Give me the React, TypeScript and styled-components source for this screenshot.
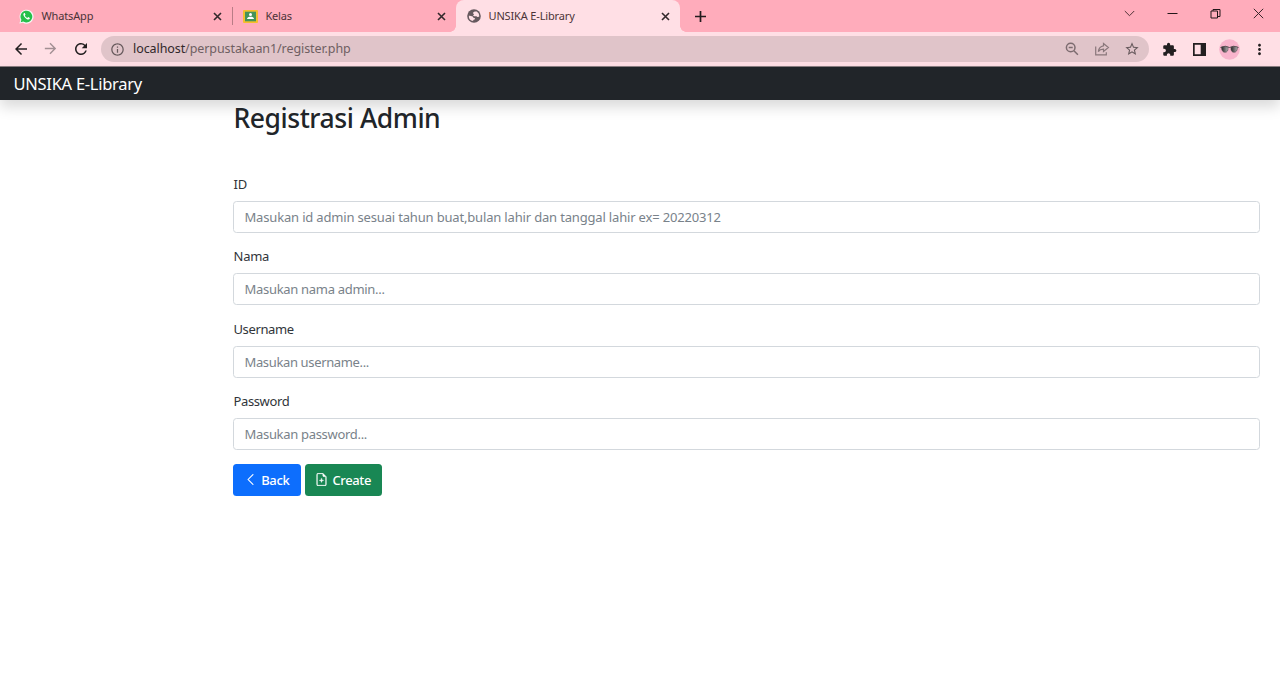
import React from "react";
import styled, { createGlobalStyle } from "styled-components";
import { MdArrowBack, MdArrowForward, MdRefresh, MdInfoOutline, MdExtension, MdMoreVert, MdStarBorder } from "react-icons/md";
import { BsChevronLeft, BsFileEarmarkPlus } from "react-icons/bs";

const GlobalStyle = createGlobalStyle`
  *, *::before, *::after { box-sizing: border-box; }
  body { margin: 0; background: #fff; font-family: "Noto Sans", "Open Sans", sans-serif; color: #212529; overflow: hidden; }
  svg { display: block; flex: none; }
`;

const Screen = styled.div`
  width: 1280px;
  height: 682px;
  display: flex;
  flex-direction: column;
  background: #fff;
`;

const TabStrip = styled.div`
  height: 32px;
  flex: none;
  display: flex;
  align-items: stretch;
  padding-left: 8px;
  background: #ffacbb;
`;

const Tab = styled.div<{ $active?: boolean; $divider?: boolean }>`
  position: relative;
  width: 224px;
  display: flex;
  align-items: center;
  padding: 0 10px 0 11px;
  border-radius: 8px 8px 0 0;
  background: ${(p) => (p.$active ? "#ffdfe5" : "transparent")};
  ${(p) =>
    p.$divider &&
    `&::after { content: ""; position: absolute; right: -1px; top: 7px; width: 1px; height: 18px; background: #b97c86; }`}
  ${(p) =>
    p.$active &&
    `
    &::before, &::after { content: ""; position: absolute; bottom: 0; width: 6px; height: 6px; }
    &::before { left: -6px; background: radial-gradient(circle at 0 0, transparent 5.5px, #ffdfe5 6px); }
    &::after { right: -6px; background: radial-gradient(circle at 100% 0, transparent 5.5px, #ffdfe5 6px); }
  `}
`;

const TabTitle = styled.span<{ $spacing: number }>`
  flex: 1;
  margin-left: 7.5px;
  font-size: 11px;
  line-height: 16px;
  letter-spacing: ${(p) => p.$spacing}px;
  color: #4b3337;
  white-space: nowrap;
`;

const NewTab = styled.div`
  display: flex;
  align-items: center;
  margin-left: 14px;
`;

const WindowControls = styled.div`
  display: flex;
  margin-left: auto;
  padding-bottom: 5px;
  align-items: center;
`;

const Control = styled.div`
  width: 43px;
  display: flex;
  justify-content: center;
`;

const Toolbar = styled.div`
  height: 35px;
  flex: none;
  display: flex;
  align-items: center;
  background: #ffdfe5;
  border-bottom: 1px solid #8b7e82;
  color: #231f20;
`;

const NavButtons = styled.div`
  flex: none;
  width: 101px;
  display: flex;
  gap: 12.5px;
  padding-left: 11.5px;
`;

const AddressBar = styled.div`
  flex: none;
  width: 1048px;
  height: 26px;
  display: flex;
  align-items: center;
  border-radius: 13px;
  background: #e0c4c9;
  padding: 0 9px 0 9px;
  color: #66595c;
`;

const Url = styled.span`
  flex: 1;
  margin-left: 8px;
  font-size: 12.5px;
  line-height: 18px;
  letter-spacing: -0.08px;
  color: #6f5f62;
`;

const Host = styled.span`
  color: #30282a;
`;

const AddressActions = styled.div`
  display: flex;
  gap: 14px;
`;

const Extensions = styled.div`
  flex: none;
  display: flex;
  align-items: center;
  margin-left: 12px;
`;

const ExtensionSlot = styled.div<{ $width: number }>`
  width: ${(p) => p.$width}px;
  flex: none;
  display: flex;
  justify-content: center;
`;

const Navbar = styled.header`
  position: relative;
  height: 33px;
  flex: none;
  display: flex;
  align-items: center;
  padding: 0 14px 0 13.5px;
  background: #212529;
  box-shadow: 0 7px 14px rgba(0, 0, 0, 0.15);
`;

const Brand = styled.span`
  color: #fff;
  font-size: 16.5px;
  line-height: 24px;
  letter-spacing: -0.27px;
`;

const Main = styled.main`
  padding: 0 20.5px 0 233px;
`;

const Heading = styled.h1`
  position: relative;
  margin: 0 0 39.5px;
  font-size: 26.5px;
  font-weight: 500;
  line-height: 34px;
  letter-spacing: -0.45px;
  padding: 1px 0 0 0.5px;
`;

const Field = styled.div`
  height: 72.5px;
`;

const Label = styled.label<{ $spacing: number }>`
  display: block;
  height: 18px;
  line-height: 18px;
  font-size: 13px;
  padding-left: 0.5px;
  color: #31353a;
  letter-spacing: ${(p) => p.$spacing}px;
`;

const Input = styled.input<{ $spacing: number }>`
  display: block;
  width: 100%;
  height: 32px;
  margin-top: 8px;
  padding: 0 10.5px;
  border: 1px solid #d3d8dd;
  border-radius: 3.5px;
  background: #fff;
  outline: none;
  font: 13px "Noto Sans", sans-serif;
  letter-spacing: ${(p) => p.$spacing}px;
  &::placeholder { color: #79828a; opacity: 1; }
`;

const Actions = styled.div`
  display: flex;
  gap: 4px;
  margin-top: -1px;
`;

const Button = styled.button<{ $tone: string; $width: number }>`
  width: ${(p) => p.$width}px;
  height: 32px;
  display: flex;
  align-items: center;
  justify-content: center;
  gap: 4px;
  padding: 0;
  border: 0;
  border-radius: 3.5px;
  background: ${(p) => p.$tone};
  color: #fff;
  font: 500 13px "Noto Sans", sans-serif;
  letter-spacing: -0.35px;
  svg { stroke: currentColor; stroke-width: 0.4; }
`;

const CloseIcon = () => (
  <svg width="9" height="9" viewBox="0 0 9 9" stroke="#33282b" strokeWidth="1.6">
    <path d="M1 1l7 7M8 1l-7 7" />
  </svg>
);

const WhatsAppIcon = () => (
  <svg width="15" height="15" viewBox="0 0 15 15">
    <path d="M.4 14.6l1-3.6A7 7 0 1 1 4 13.7z" fill="#f7f5f5" />
    <path d="M1.7 13.3l.7-2.5A5.9 5.9 0 1 1 4.2 12.6z" fill="#25c04b" />
    <path d="M5.2 4.1c-.9.5-1 1.5-.6 2.5.8 1.8 2.1 3.1 3.9 3.8 1.1.4 2 .1 2.3-.9l.1-.6-1.7-.9-.9.9c-1.1-.4-2-1.3-2.5-2.4l.7-.8-.7-1.6z" fill="#fff" />
  </svg>
);

const ClassroomIcon = () => (
  <svg width="15" height="13" viewBox="0 0 15 13">
    <rect width="15" height="13" rx="1" fill="#f4bf2c" />
    <rect x="2" y="1.7" width="11" height="9.6" fill="#45935a" />
    <circle cx="7.5" cy="4.5" r="1.5" fill="#fff" />
    <path d="M4 9c0-1.6 1.8-2.2 3.5-2.2S11 7.4 11 9z" fill="#fff" />
  </svg>
);

const GlobeIcon = () => (
  <svg width="14" height="14" viewBox="0 0 14 14">
    <circle cx="7" cy="7" r="6.8" fill="#66595e" />
    <path
      d="M9.8 2.5C8 2.2 6 2.8 6 4c0 .9 1 .6.9 1.4-.1.8-1 .7-.8 1.3.2.7 2.2.3 3.2.6.9.3.9.9 1.7.8.6-.1 1-.4 1.3-.9A5.3 5.3 0 0 0 9.8 2.5zM1.8 6.7c1.4 0 3 .1 3.9.8.8.6.3 1.2 1.1 1.5.7.2 1.3.2 1.3.8 0 .7-1.4.7-1.8 1.3-.2.3-.1.6-.1 1A5.3 5.3 0 0 1 1.8 6.7z"
      fill="#ffdfe5"
    />
  </svg>
);

const ZoomOutIcon = () => (
  <svg width="16" height="16" viewBox="0 0 16 16" fill="none" stroke="#7d6c70" strokeWidth="1.5">
    <circle cx="6.7" cy="6.5" r="4.3" />
    <path d="M4.7 6.5h4M9.9 9.7l4 4" />
  </svg>
);

const ShareIcon = () => (
  <svg width="16" height="16" viewBox="0 0 16 16" fill="none" stroke="#89777b" strokeWidth="1.2">
    <path d="M1.7 5.5v8.3h10.6v-2.6" />
    <path d="M9.5 2.5l4.9 4-4.9 4V8.2c-2.2 0-4 .6-5.2 2.4.4-3 2-5.4 5.2-5.8z" />
  </svg>
);

const GlassesAvatar = () => (
  <svg width="21" height="21" viewBox="0 0 21 21">
    <defs>
      <linearGradient id="lens" x1="0" y1="0" x2="1" y2="0">
        <stop offset="0" stopColor="#222" />
        <stop offset="1" stopColor="#b5aeb2" />
      </linearGradient>
    </defs>
    <circle cx="10.5" cy="10.5" r="10.3" fill="#f8b4cc" />
    <path d="M1.5 8.5q5-2.5 9 0 4-2.5 9 0" fill="none" stroke="#54464d" />
    <path d="M2.5 8q3.5-1.3 6.5.3c.4 3.2-.8 5-3 5S2.5 11.5 2.5 8z" fill="url(#lens)" stroke="#554e52" strokeWidth=".6" />
    <path d="M12 8.3q3-1.6 6.500-.3c0 3.500-1.300 5.300-3.500 5.300s-3.400-1.800-3-5z" fill="url(#lens)" stroke="#554e52" strokeWidth=".6" />
  </svg>
);

const tabs = [
  { title: "WhatsApp", icon: <WhatsAppIcon />, spacing: -0.15, divider: true },
  { title: "Kelas", icon: <ClassroomIcon />, spacing: -0.2 },
  { title: "UNSIKA E-Library", icon: <GlobeIcon />, spacing: -0.15, active: true },
];

const fields = [
  {
    label: "ID",
    type: "text",
    placeholder: "Masukan id admin sesuai tahun buat,bulan lahir dan tanggal lahir ex= 20220312",
    labelSpacing: -0.2,
    spacing: -0.17,
  },
  { label: "Nama", type: "text", placeholder: "Masukan nama admin...", labelSpacing: -0.25, spacing: -0.3 },
  { label: "Username", type: "text", placeholder: "Masukan username...", labelSpacing: -0.38, spacing: -0.36 },
  { label: "Password", type: "password", placeholder: "Masukan password...", labelSpacing: -0.38, spacing: -0.31 },
];

export default function App() {
  return (
    <Screen>
      <GlobalStyle />
      <TabStrip>
        {tabs.map((t) => (
          <Tab key={t.title} $active={t.active} $divider={t.divider}>
            {t.icon}
            <TabTitle $spacing={t.spacing}>{t.title}</TabTitle>
            <CloseIcon />
          </Tab>
        ))}
        <NewTab>
          <svg width="13" height="13" viewBox="0 0 13 13" stroke="#231c1e" strokeWidth="1.7">
            <path d="M6.5 1v11M1 6.5h11" />
          </svg>
        </NewTab>
        <WindowControls>
          <Control>
            <svg width="11" height="11" viewBox="0 0 11 11" fill="none" stroke="#513438">
              <path d="M.8 3l4.7 4.7L10.2 3" />
            </svg>
          </Control>
          <Control>
            <svg width="11" height="11" viewBox="0 0 11 11" stroke="#221719">
              <path d="M.5 5.5h10" />
            </svg>
          </Control>
          <Control>
            <svg width="11" height="11" viewBox="0 0 11 11" fill="none" stroke="#221719">
              <path d="M1 3h6.5v7H1zM3 3V1.5h7v7H7.5" />
            </svg>
          </Control>
          <Control>
            <svg width="11" height="11" viewBox="0 0 11 11" stroke="#3a262a">
              <path d="M.8.8l9.4 9.4M10.2.8L.8 10.2" />
            </svg>
          </Control>
        </WindowControls>
      </TabStrip>
      <Toolbar>
        <NavButtons>
          <MdArrowBack size={18} />
          <MdArrowForward size={17} color="#a28f93" />
          <MdRefresh size={18} />
        </NavButtons>
        <AddressBar>
          <MdInfoOutline size={15} />
          <Url>
            <Host>localhost</Host>/perpustakaan1/register.php
          </Url>
          <AddressActions>
            <ZoomOutIcon />
            <ShareIcon />
            <MdStarBorder size={16} />
          </AddressActions>
        </AddressBar>
        <Extensions>
          <ExtensionSlot $width={16}>
            <MdExtension size={15} />
          </ExtensionSlot>
          <ExtensionSlot $width={44}>
            <svg width="13" height="13" viewBox="0 0 13 13">
              <path d="M0 0h13v13H0zM1.7 1.7v9.6h6V1.7z" fill="#231f20" fillRule="evenodd" />
            </svg>
          </ExtensionSlot>
          <ExtensionSlot $width={17}>
            <GlassesAvatar />
          </ExtensionSlot>
          <ExtensionSlot $width={43}>
            <MdMoreVert size={17} />
          </ExtensionSlot>
        </Extensions>
      </Toolbar>
      <Navbar>
        <Brand>UNSIKA E-Library</Brand>
      </Navbar>
      <Main>
        <Heading>Registrasi Admin</Heading>
        {fields.map((f) => (
          <Field key={f.label}>
            <Label htmlFor={f.label} $spacing={f.labelSpacing}>
              {f.label}
            </Label>
            <Input id={f.label} type={f.type} placeholder={f.placeholder} $spacing={f.spacing} />
          </Field>
        ))}
        <Actions>
          <Button $tone="#0d6efd" $width={67.5}>
            <BsChevronLeft size={13} />
            Back
          </Button>
          <Button $tone="#198754" $width={77.5}>
            <BsFileEarmarkPlus size={13} />
            Create
          </Button>
        </Actions>
      </Main>
    </Screen>
  );
}
